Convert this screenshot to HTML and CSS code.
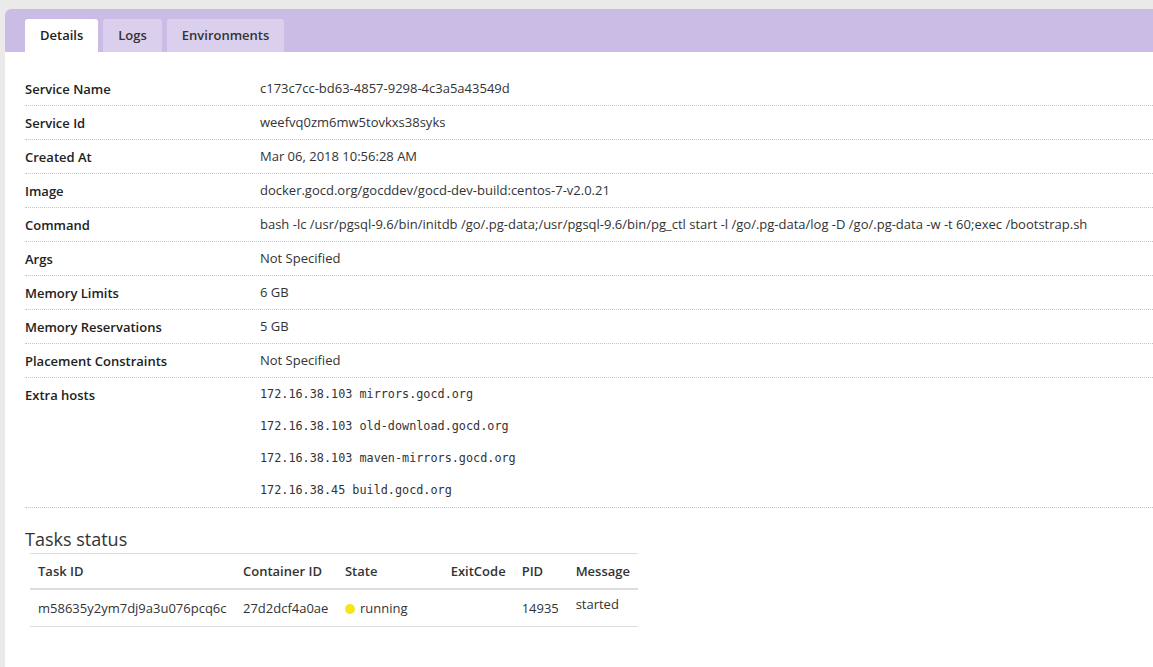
FILE: index.html
```html
<!DOCTYPE html>
<html>
<head>
<meta charset="utf-8">
<link rel="stylesheet" href="styles.css">
</head>
<body>
<div class="panel">
  <div class="tabbar">
    <div class="tab active">Details</div>
    <div class="tab">Logs</div>
    <div class="tab">Environments</div>
  </div>
  <div class="content">
    <div class="details">
      <div class="row"><div class="key">Service Name</div><div class="val">c173c7cc-bd63-4857-9298-4c3a5a43549d</div></div>
      <div class="row"><div class="key">Service Id</div><div class="val">weefvq0zm6mw5tovkxs38syks</div></div>
      <div class="row"><div class="key">Created At</div><div class="val">Mar 06, 2018 10:56:28 AM</div></div>
      <div class="row"><div class="key">Image</div><div class="val">docker.gocd.org/gocddev/gocd-dev-build:centos-7-v2.0.21</div></div>
      <div class="row"><div class="key">Command</div><div class="val">bash -lc /usr/pgsql-9.6/bin/initdb /go/.pg-data;/usr/pgsql-9.6/bin/pg_ctl start -l /go/.pg-data/log -D /go/.pg-data -w -t 60;exec /bootstrap.sh</div></div>
      <div class="row"><div class="key">Args</div><div class="val">Not Specified</div></div>
      <div class="row"><div class="key">Memory Limits</div><div class="val">6 GB</div></div>
      <div class="row"><div class="key">Memory Reservations</div><div class="val">5 GB</div></div>
      <div class="row"><div class="key">Placement Constraints</div><div class="val">Not Specified</div></div>
      <div class="row hosts"><div class="key">Extra hosts</div>
        <div class="val mono">
          <div class="host">172.16.38.103 mirrors.gocd.org</div>
          <div class="host">172.16.38.103 old-download.gocd.org</div>
          <div class="host">172.16.38.103 maven-mirrors.gocd.org</div>
          <div class="host">172.16.38.45 build.gocd.org</div>
        </div>
      </div>
    </div>
    <h3 class="tasks-title">Tasks status</h3>
    <table class="tasks">
      <thead>
        <tr><th class="c1">Task ID</th><th class="c2">Container ID</th><th class="c3">State</th><th class="c4">ExitCode</th><th class="c5">PID</th><th class="c6">Message</th></tr>
      </thead>
      <tbody>
        <tr><td>m58635y2ym7dj9a3u076pcq6c</td><td>27d2dcf4a0ae</td><td class="state"><span class="dot"></span>running</td><td></td><td>14935</td><td class="msg">started</td></tr>
      </tbody>
    </table>
  </div>
</div>
</body>
</html>
```
FILE: styles.css
```css
html, body {
  margin: 0;
  padding: 0;
  background: #eaeaea;
  overflow: hidden;
}
body {
  font-family: "Open Sans", "Noto Sans", sans-serif;
  color: #333;
  padding: 9px 0 0 5px;
  height: 667px;
  box-sizing: border-box;
}
.panel {
  background: #fff;
  border-top-left-radius: 6px;
  height: 100%;
  overflow: hidden;
}
.tabbar {
  background: #cbbce5;
  height: 43px;
  box-sizing: border-box;
  padding: 10px 0 0 20px;
  display: flex;
  gap: 5px;
  align-items: flex-end;
}
.tab {
  height: 33px;
  box-sizing: border-box;
  padding: 0 15px 2px;
  display: flex;
  align-items: center;
  font-size: 13px;
  font-weight: 600;
  color: #333;
  background: #dad0ee;
  border-radius: 3px 3px 0 0;
}
.tab.active {
  background: #fff;
  color: #222;
}
.content {
  padding: 20px 0 0 20px;
}
.details {
  display: flex;
  flex-direction: column;
}
.row {
  display: flex;
  align-items: flex-start;
  border-bottom: 1px dotted #c4c4c4;
  min-height: 33px;
  font-size: 13px;
}
.key {
  width: 235px;
  flex: none;
  font-weight: 600;
  color: #222;
  line-height: 18px;
  padding-top: 8px;
}
.val {
  color: #333;
  line-height: 18px;
  padding-top: 7px;
}
.val.mono {
  font-family: "DejaVu Sans Mono", "Liberation Mono", monospace;
  font-size: 11.8px;
  padding-top: 0;
  padding-bottom: 0;
}
.host {
  height: 32px;
  line-height: 32px;
}
.row.hosts {
  min-height: 129px;
}
.tasks-title {
  margin: 19px 0 0 0;
  font-size: 18px;
  font-weight: 400;
  color: #333;
  line-height: 24px;
}
.tasks {
  margin: 2px 0 0 5px;
  border-collapse: collapse;
  font-size: 13px;
  color: #333;
  width: 608px;
}
.tasks th {
  text-align: left;
  font-weight: 600;
  border-top: 1px solid #ddd;
  border-bottom: 2px solid #ddd;
  height: 35px;
  padding: 0 8px;
  box-sizing: border-box;
  vertical-align: middle;
}
.tasks td {
  height: 38px;
  box-sizing: border-box;
  padding: 0 8px;
  border-bottom: 1px solid #ddd;
  vertical-align: middle;
  white-space: nowrap;
}
.tasks td.state {
  padding-top: 0;
}
.tasks td.msg {
  vertical-align: top;
  padding-top: 5px;
}
.c1 { width: 205px; }
.c2 { width: 102px; }
.c3 { width: 107px; }
.c4 { width: 70px; }
.c5 { width: 54px; }
.dot {
  display: inline-block;
  width: 10px;
  height: 10px;
  border-radius: 50%;
  background: #f7e51b;
  margin-right: 5px;
  vertical-align: -1px;
}
```
